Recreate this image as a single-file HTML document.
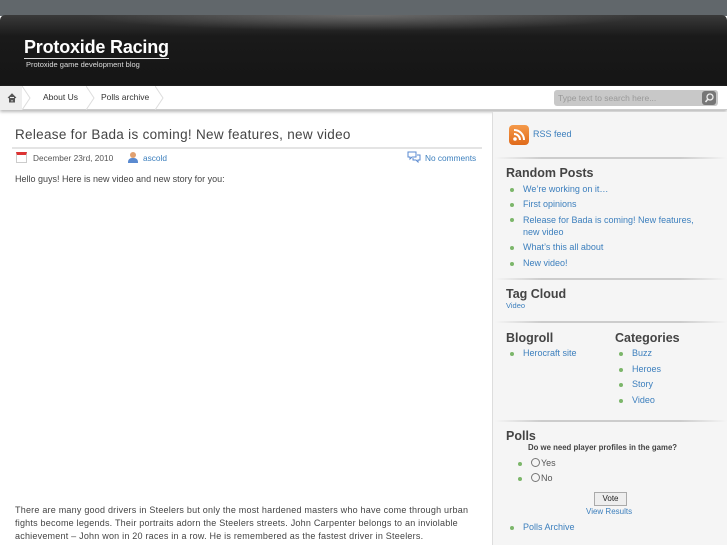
<!DOCTYPE html>
<html><head><style>
*{margin:0;padding:0;box-sizing:border-box}
body{width:727px;height:545px;overflow:hidden;background:#fff;font-family:"Liberation Sans",sans-serif;position:relative}
.top{position:absolute;left:0;top:0;width:727px;height:16px;background:#61676b}
.hdr{position:absolute;left:0;top:15px;width:727px;height:71px;background:linear-gradient(#3a3a3a,#1a1a1a 30%,#151515);border-radius:5px 5px 0 0}
.hdr .shine{position:absolute;left:80px;right:80px;top:0;height:16px;background:radial-gradient(ellipse at center top,rgba(255,255,255,.25),transparent 70%)}
.t1{position:absolute;left:24px;top:36px;color:#fff;font-size:18px;font-weight:bold;border-bottom:1px solid #ddd;line-height:22px;letter-spacing:-.2px}
.t2{position:absolute;left:26px;top:60px;color:#ddd;font-size:7.5px}
.nav{position:absolute;left:0;top:86px;width:727px;height:24px;background:#fff;border-bottom:1px solid #ccc;box-shadow:0 2px 3px #bbb}
.nav span{position:absolute;top:6px;font-size:8.5px;color:#333}
.sep{position:absolute;top:0;width:10px;height:24px}
.search{position:absolute;left:554px;top:90px;width:164px;height:16px;background:#c8c8c8;border-radius:3px;color:#999;font-size:8.5px;padding:3px 4px}
.sbtn{position:absolute;left:702px;top:91px;width:14px;height:14px;background:#777;border-radius:3px}
.side{position:absolute;left:492px;top:112px;width:235px;height:433px;background:#f5f5f5;border-left:1px solid #ddd}
a,.lk{color:#3c7fbd;text-decoration:none}
.h{position:absolute;font-size:12.5px;font-weight:bold;color:#444}
.li{position:absolute;font-size:9px;color:#3c7fbd}
.li:before{content:"";position:absolute;left:-13px;top:4px;width:4px;height:4px;border-radius:50%;background:#7cb66a}
.hr{position:absolute;left:495px;width:232px;height:2px;background:linear-gradient(90deg,transparent,#ccc 20%,#ccc 80%,transparent)}
.p{position:absolute;left:15px;font-size:9px;color:#444;line-height:13px;width:490px}
</style></head><body>
<div class="top"></div>
<div class="hdr"><div class="shine"></div></div>
<div class="t1">Protoxide Racing</div>
<div class="t2">Protoxide game development blog</div>
<div class="nav">
<div style="position:absolute;left:0;top:0;width:22px;height:24px;background:#eee"></div>
<svg style="position:absolute;left:7px;top:7px" width="10" height="10"><path d="M1 5L5 1L9 5M2.5 4V9H7.5V4M4 9V6.5H6V9" fill="#555" stroke="#555"/></svg>
<svg class="sep" style="left:22px"><path d="M0 0L8 12L0 24" fill="none" stroke="#ddd"/></svg>
<span style="left:43px">About Us</span>
<svg class="sep" style="left:86px"><path d="M0 0L8 12L0 24" fill="none" stroke="#ddd"/></svg>
<span style="left:101px">Polls archive</span>
<svg class="sep" style="left:155px"><path d="M0 0L8 12L0 24" fill="none" stroke="#ddd"/></svg>
</div>
<div class="search">Type text to search here...</div>
<div class="sbtn"><svg width="14" height="14"><circle cx="8" cy="6" r="3" fill="none" stroke="#eee" stroke-width="1.3"/><path d="M6 8L3.5 11" stroke="#eee" stroke-width="1.5"/></svg></div>

<div style="position:absolute;left:15px;top:127px;font-size:13.5px;color:#444;letter-spacing:.3px">Release for Bada is coming! New features, new video</div>
<div style="position:absolute;left:12px;top:147px;width:470px;height:2px;background:#e4e4e4"></div>
<div style="position:absolute;left:16px;top:152px;width:11px;height:11px;border:1px solid #ccc;border-top:3px solid #d33;background:#fff"></div>
<div style="position:absolute;left:33px;top:153px;font-size:8.3px;color:#555">December 23rd, 2010</div>
<div style="position:absolute;left:128px;top:152px;width:10px;height:11px"><div style="width:6px;height:6px;border-radius:50%;background:#e0a070;margin-left:2px"></div><div style="width:10px;height:5px;background:#5a8ad0;border-radius:4px 4px 0 0"></div></div>
<div class="lk" style="position:absolute;left:143px;top:153px;font-size:8.3px">ascold</div>
<svg style="position:absolute;left:407px;top:151px" width="14" height="12"><path d="M1 1H9V6H5L3 8V6H1Z M6 7V9H9L11 11V9H13V4H10" fill="none" stroke="#5a8ad0"/></svg>
<div class="lk" style="position:absolute;left:425px;top:153px;font-size:8.3px">No comments</div>
<div class="p" style="top:173px">Hello guys! Here is new video and new story for you:</div>
<div class="p" style="top:504px;letter-spacing:.22px">There are many good drivers in Steelers but only the most hardened masters who have come through urban<br>fights become legends. Their portraits adorn the Steelers streets. John Carpenter belongs to an inviolable<br>achievement – John won in 20 races in a row. He is remembered as the fastest driver in Steelers.</div>

<div class="side"></div>
<div style="position:absolute;left:509px;top:125px;width:20px;height:20px;border-radius:4px;background:linear-gradient(#f59a4a,#e06a1a)"><svg width="20" height="20"><circle cx="6" cy="14" r="1.8" fill="#fff"/><path d="M5 9A6 6 0 0 1 11 15M5 5A10 10 0 0 1 15 15" fill="none" stroke="#fff" stroke-width="2"/></svg></div>
<div class="lk" style="position:absolute;left:533px;top:129px;font-size:9px">RSS feed</div>
<div class="hr" style="top:157px"></div>
<div class="h" style="left:506px;top:166px">Random Posts</div>
<div class="li" style="left:523px;top:184px">We’re working on it…</div>
<div class="li" style="left:523px;top:199px">First opinions</div>
<div class="li" style="left:523px;top:214px;line-height:12px;width:184px">Release for Bada is coming! New features, new video</div>
<div class="li" style="left:523px;top:242px">What’s this all about</div>
<div class="li" style="left:523px;top:258px">New video!</div>
<div class="hr" style="top:278px"></div>
<div class="h" style="left:506px;top:287px">Tag Cloud</div>
<div class="lk" style="position:absolute;left:506px;top:301px;font-size:7.5px">Video</div>
<div class="hr" style="top:321px"></div>
<div class="h" style="left:506px;top:331px">Blogroll</div>
<div class="h" style="left:615px;top:331px">Categories</div>
<div class="li" style="left:523px;top:348px">Herocraft site</div>
<div class="li" style="left:632px;top:348px">Buzz</div>
<div class="li" style="left:632px;top:364px">Heroes</div>
<div class="li" style="left:632px;top:379px">Story</div>
<div class="li" style="left:632px;top:395px">Video</div>
<div class="hr" style="top:420px"></div>
<div class="h" style="left:506px;top:429px">Polls</div>
<div style="position:absolute;left:528px;top:443px;font-size:7.8px;font-weight:bold;color:#444">Do we need player profiles in the game?</div>
<div class="li" style="left:531px;top:458px;color:#555"><span style="display:inline-block;width:9px;height:9px;border:1px solid #777;border-radius:50%;vertical-align:-1px;margin-right:1px"></span>Yes</div>
<div class="li" style="left:531px;top:473px;color:#555"><span style="display:inline-block;width:9px;height:9px;border:1px solid #777;border-radius:50%;vertical-align:-1px;margin-right:1px"></span>No</div>
<div style="position:absolute;left:594px;top:492px;width:33px;height:14px;border:1px solid #aaa;background:#eee;font-size:8px;text-align:center;line-height:12px;color:#222">Vote</div>
<div class="lk" style="position:absolute;left:586px;top:507px;font-size:8px">View Results</div>
<div class="li" style="left:523px;top:522px">Polls Archive</div>
</body></html>
